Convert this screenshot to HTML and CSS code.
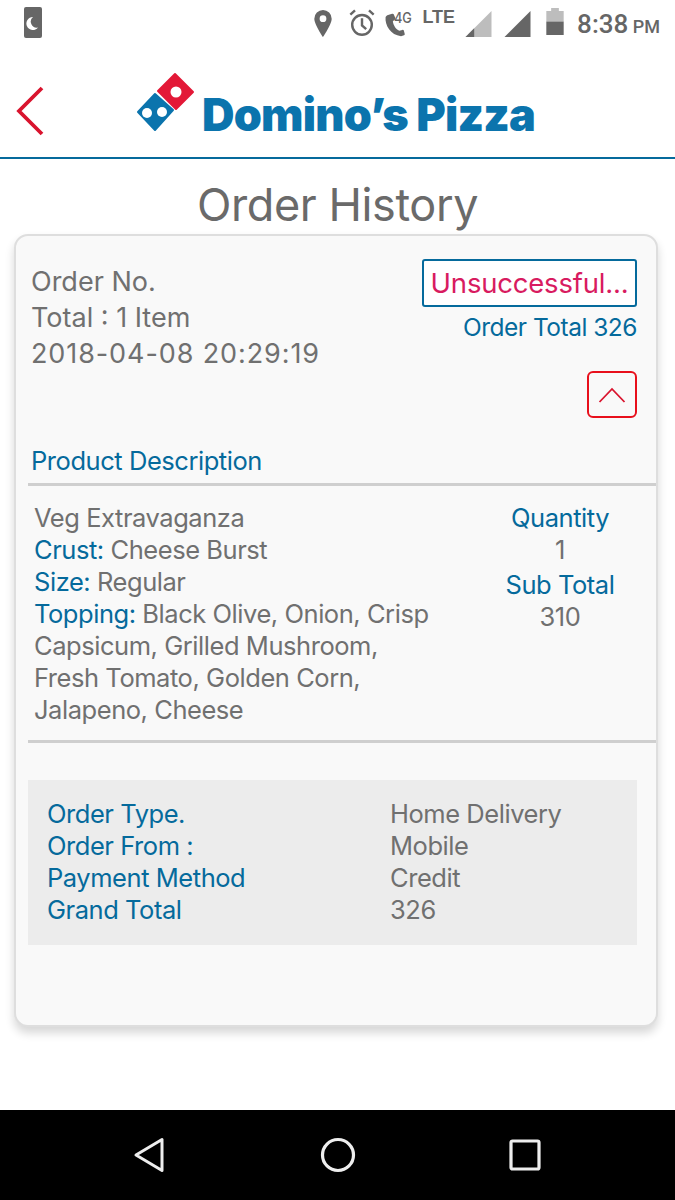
FILE: index.html
```html
<!DOCTYPE html>
<html lang="en">
<head>
<meta charset="utf-8">
<title>Order History</title>
<link rel="stylesheet" href="styles.css">
</head>
<body>
<div class="screen">
  <div class="status">
    <svg class="st-moon" width="18" height="31" viewBox="0 0 18 31"><rect width="18" height="31" rx="2" fill="#666"/><path d="M9 10a6.500 6.500 0 1 0 5 10.500a6 6 0 0 1-5-10.500z" fill="#fff"/></svg>
    <div class="st-right">
      <svg class="st-pin" width="18" height="27" viewBox="0 0 18 28"><path fill-rule="evenodd" d="M9 0a9 9 0 0 1 9 9c0 6-9 19-9 19S0 15 0 9a9 9 0 0 1 9-9zm0 5.500a3.500 3.500 0 1 0 0 7 3.500 3.500 0 0 0 0-7z" fill="#666"/></svg>
      <svg class="st-alarm" width="28" height="28" viewBox="0 0 28 30"><circle cx="14" cy="17" r="10.500" fill="none" stroke="#666" stroke-width="2.600"/><path d="M14 10v7.500l4.500 4M1.500 6l5-4.500M26.500 6l-5-4.500" fill="none" stroke="#666" stroke-width="2.600"/></svg>
      <div class="st-call">
        <svg width="22" height="24" viewBox="0 0 24 28"><path d="M1 5c-1 9 6 21 18 22l3.500-1c.800-.400 1-1 .800-1.800l-1-3.700c-.300-.800-1-1-1.800-.800l-3.500 1c-4-1.500-7-6.500-7.500-11l2.500-2c.600-.500.700-1.200.400-1.800L10.500 1.500C10 .800 9.400.600 8.600.900L3 2.500C2 3 1.200 4 1 5z" fill="#666"/></svg>
        <span class="st-4g">4G</span>
      </div>
      <span class="st-lte">LTE</span>
      <svg class="st-sig" width="27" height="26" viewBox="0 0 27 27"><path d="M0 27 27 0v27z" fill="#bdbdbd"/><path d="M0 27l9-9v9z" fill="#666"/></svg>
      <svg class="st-sig" width="27" height="26" viewBox="0 0 27 27"><path d="M0 27 27 0v27z" fill="#666"/></svg>
      <svg class="st-bat" width="18" height="27" viewBox="0 0 18 28"><path d="M5 0h8v3h5v11H0V3h5z" fill="#bdbdbd"/><rect y="14" width="18" height="14" fill="#666"/></svg>
      <span class="st-time">8:38 <small>PM</small></span>
    </div>
  </div>

  <header class="top">
    <svg class="back" width="30" height="50" viewBox="0 0 30 50"><path d="M27 2 4 25l23 23" fill="none" stroke="#d9142e" stroke-width="3.800"/></svg>
    <div class="logo">
      <svg width="60" height="60" viewBox="0 0 60 60">
        <path d="M39 2 57 20 40 37 22 19z" fill="#e31837" stroke="#e31837" stroke-width="2" stroke-linejoin="round"/>
        <circle cx="40" cy="20" r="5.500" fill="#fff"/>
        <path d="M19 22 37 38 19 58 2 40z" fill="#0b74ad" stroke="#0b74ad" stroke-width="2" stroke-linejoin="round"/>
        <circle cx="11" cy="41" r="5" fill="#fff"/>
        <circle cx="26" cy="40" r="5" fill="#fff"/>
      </svg>
      <span class="wordmark">Domino’s Pizza</span>
    </div>
  </header>

  <main class="content">
    <h1 class="title">Order History</h1>
    <section class="card">
      <div class="summary">
        <div class="sum-left">
          <div>Order No.</div>
          <div>Total : 1 Item</div>
          <div class="date">2018-04-08 20:29:19</div>
        </div>
        <div class="sum-right">
          <div class="badge">Unsuccessful...</div>
          <div class="total">Order Total 326</div>
          <button class="toggle" aria-label="Collapse">
            <svg width="28" height="16" viewBox="0 0 28 16"><path d="M1.500 15 14 2l12.500 13" fill="none" stroke="#d9142e" stroke-width="1.800"/></svg>
          </button>
        </div>
      </div>
      <div class="desc-head">Product Description</div>
      <div class="product">
        <div class="prod-left">
          <div>Veg Extravaganza</div>
          <div><span class="blue">Crust:</span> Cheese Burst</div>
          <div><span class="blue">Size:</span> Regular</div>
          <div><span class="blue">Topping:</span> Black Olive, Onion, Crisp Capsicum, Grilled Mushroom, Fresh Tomato, Golden Corn, Jalapeno, Cheese</div>
        </div>
        <div class="prod-right">
          <div class="blue">Quantity</div>
          <div>1</div>
          <div class="blue subt">Sub Total</div>
          <div>310</div>
        </div>
      </div>
      <div class="details">
        <div class="blue">Order Type.</div><div>Home Delivery</div>
        <div class="blue">Order From :</div><div>Mobile</div>
        <div class="blue">Payment Method</div><div>Credit</div>
        <div class="blue">Grand Total</div><div>326</div>
      </div>
    </section>
  </main>

  <nav class="navbar">
    <svg width="32" height="36" viewBox="0 0 32 36"><path d="M29 2.500v31L3 18z" fill="none" stroke="#eee" stroke-width="3" stroke-linejoin="round"/></svg>
    <svg width="36" height="36" viewBox="0 0 36 36"><circle cx="18" cy="18" r="15.500" fill="none" stroke="#eee" stroke-width="3.200"/></svg>
    <svg width="32" height="32" viewBox="0 0 32 32"><rect x="2" y="2" width="28" height="28" rx="1.500" fill="none" stroke="#eee" stroke-width="3.200"/></svg>
  </nav>
</div>
</body>
</html>
```
FILE: styles.css
```css
* { box-sizing: border-box; }
html, body { margin: 0; padding: 0; background: #fff; }
body { font-family: Inter, "Liberation Sans", Arial, sans-serif; color: #707070; }
.screen { width: 675px; height: 1200px; display: flex; flex-direction: column; overflow: hidden; }

.status { height: 50px; flex: none; display: flex; justify-content: space-between; align-items: flex-start; padding: 7px 15px 0 24px; }
.st-moon { display: block; }
.st-right { display: flex; align-items: flex-start; }
.st-pin { margin: 3px 0 0 0; }
.st-alarm { margin: 2px 0 0 16px; }
.st-call { position: relative; margin: 6px 0 0 8px; width: 38px; height: 26px; }
.st-4g { position: absolute; left: 10px; top: -4px; font-size: 15px; font-weight: 500; line-height: 18px; color: #666; transform: scaleX(.85); transform-origin: left; }
.st-lte { font-size: 18px; font-weight: 700; color: #666; line-height: 20px; font-family: "Liberation Sans", sans-serif; }
.st-sig { margin: 4px 0 0 10px; }
.st-sig + .st-sig { margin-left: 12px; }
.st-bat { margin: 1px 0 0 15px; }
.st-time { margin-left: 13px; font-size: 26px; line-height: 34px; color: #666; font-family: Roboto, sans-serif; font-weight: 500; word-spacing: -2px; }
.st-time small { font-size: 18px; font-weight: 500; }

.top { height: 109px; flex: none; border-bottom: 2px solid #056a9c; display: flex; align-items: flex-start; padding: 36px 0 0 15px; position: relative; }
.logo { display: flex; align-items: flex-start; position: absolute; left: 136px; top: 22px; }
.wordmark { margin-left: 6px; margin-top: 13px; font-family: Inter, sans-serif; font-weight: 900; font-size: 45px; line-height: 60px; letter-spacing: -.8px; color: #0b74ad; white-space: nowrap; }

.content { flex: 1; display: flex; flex-direction: column; align-items: flex-start; }
.title { margin: 17px 0 0; width: 100%; text-align: center; font-size: 45px; line-height: 58px; font-weight: 400; letter-spacing: -.4px; color: #6a6a6a; }

.card { width: 644px; height: 793px; margin: 0 0 0 14px; background: #f9f9f9; border: 2px solid #dedede; border-radius: 14px; box-shadow: 0 6px 10px rgba(0,0,0,.16); padding: 0 0 0 12px; font-size: 25.500px; line-height: 32px; letter-spacing: -.45px; }
.blue { color: #056a9c; }

.summary { display: flex; justify-content: space-between; padding: 23px 19px 0 3px; height: 204px; }
.sum-left { font-size: 27px; line-height: 36px; padding-top: 5px; letter-spacing: 0; }
.date { letter-spacing: .9px; }
.sum-right { display: flex; flex-direction: column; align-items: flex-end; }
.badge { width: 215px; height: 48px; border: 2px solid #056a9c; border-radius: 3px; background: #fff; color: #d81b60; font-size: 27.500px; line-height: 44px; text-align: center; letter-spacing: -.2px; }
.total { color: #056a9c; margin-top: 3px; line-height: 34px; font-size: 24.500px; letter-spacing: -.5px; }
.toggle { margin-top: 27px; width: 50px; height: 47px; padding: 0; display: flex; align-items: center; justify-content: center; background: transparent; border: 2px solid #e8101c; border-radius: 6px; }

.desc-head { color: #056a9c; padding: 0 0 6px 3px; line-height: 32px; margin-top: 5px; }
.product { display: flex; padding: 16px 0 16px 6px; height: 260px; border-top: 3px solid #cfcfcf; border-bottom: 3px solid #cfcfcf; }
.prod-left { width: 400px; flex: none; }
.prod-right { flex: none; width: 154px; margin-left: 49px; text-align: center; }
.subt { margin-top: 3px; }

.details { margin-top: 37px; width: 609px; height: 165px; background: #ececec; padding: 18px 19px; display: grid; grid-template-columns: 343px 1fr; align-content: start; }
.navbar { height: 90px; flex: none; background: #000; display: flex; align-items: center; padding-left: 133px; }
.navbar svg:nth-child(2) { margin-left: 155px; }
.navbar svg:nth-child(3) { margin-left: 153px; }
```
